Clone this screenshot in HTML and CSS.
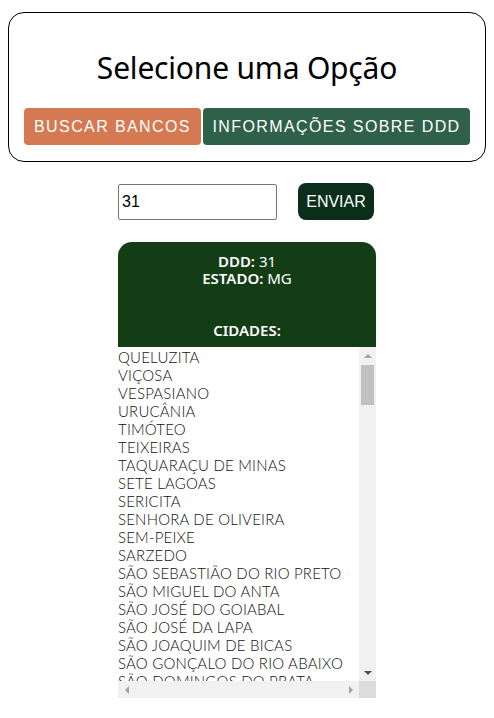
FILE: index.html
```html
<!DOCTYPE html>
<html lang="pt-BR">
<head>
<meta charset="utf-8">
<title>DDD</title>
<link rel="stylesheet" href="styles.css">
</head>
<body>
<section class="menu">
  <h1 class="title">Selecione uma Opção</h1>
  <div class="tabs">
    <button class="tab tab-banks">BUSCAR BANCOS</button>
    <button class="tab tab-ddd">INFORMAÇÕES SOBRE DDD</button>
  </div>
</section>

<form class="search">
  <input class="search-input" type="text" value="31">
  <button class="search-btn" type="button">ENVIAR</button>
</form>

<section class="result">
  <div class="result-head">
    <p class="line"><b>DDD:</b> 31</p>
    <p class="line"><b>ESTADO:</b> MG</p>
    <p class="line cities-label"><b>CIDADES:</b></p>
  </div>
  <div class="scroller">
    <ul class="cities">
      <li>QUELUZITA</li>
      <li>VIÇOSA</li>
      <li>VESPASIANO</li>
      <li>URUCÂNIA</li>
      <li>TIMÓTEO</li>
      <li>TEIXEIRAS</li>
      <li>TAQUARAÇU DE MINAS</li>
      <li>SETE LAGOAS</li>
      <li>SERICITA</li>
      <li>SENHORA DE OLIVEIRA</li>
      <li>SEM-PEIXE</li>
      <li>SARZEDO</li>
      <li>SÃO SEBASTIÃO DO RIO PRETO</li>
      <li>SÃO MIGUEL DO ANTA</li>
      <li>SÃO JOSÉ DO GOIABAL</li>
      <li>SÃO JOSÉ DA LAPA</li>
      <li>SÃO JOAQUIM DE BICAS</li>
      <li>SÃO GONÇALO DO RIO ABAIXO</li>
      <li>SÃO DOMINGOS DO PRATA</li>
      <li>SÃO BRÁS DO SUAÇUÍ</li>
      <li>SANTO HIPÓLITO</li>
      <li>SANTO ANTÔNIO DO RIO ABAIXO</li>
      <li>SANTANA DOS MONTES</li>
      <li>SANTANA DO RIACHO</li>
      <li>SANTANA DO PARAÍSO</li>
      <li>SANTA MARIA DE ITABIRA</li>
      <li>SANTA LUZIA</li>
      <li>SANTA CRUZ DO ESCALVADO</li>
      <li>SANTA BÁRBARA</li>
      <li>SABINÓPOLIS</li>
      <li>SABARÁ</li>
      <li>RIO PIRACICABA</li>
      <li>RIO MANSO</li>
      <li>RIO ESPERA</li>
      <li>RIO DOCE</li>
      <li>RIO ACIMA</li>
      <li>RIBEIRÃO DAS NEVES</li>
      <li>RESSAQUINHA</li>
      <li>RAPOSOS</li>
      <li>PRUDENTE DE MORAIS</li>
    </ul>
    <div class="vbar">
      <span class="arrow arrow-up"></span>
      <span class="vtrack"><span class="vthumb"></span></span>
      <span class="arrow arrow-down"></span>
    </div>
    <div class="hbar">
      <span class="arrow arrow-left"></span>
      <span class="htrack"></span>
      <span class="arrow arrow-right"></span>
    </div>
    <div class="corner"></div>
  </div>
</section>
</body>
</html>
```

FILE: styles.css
```css
html, body {
  margin: 0;
  padding: 0;
  background: #ffffff;
}

body {
  padding: 12px 8px 8px;
  font-family: "Noto Sans", "Open Sans", sans-serif;
  color: #000;
}

.menu {
  border: 1px solid #000;
  border-radius: 16px;
  padding: 0 16px 16px;
  display: flex;
  flex-direction: column;
  align-items: center;
}

.title {
  margin: 34px 0 19px;
  font-family: "Noto Sans", sans-serif;
  font-weight: 400;
  font-size: 30px;
  line-height: 42px;
  letter-spacing: -0.2px;
}

.tabs {
  display: flex;
  gap: 2px;
}

.tab {
  border: none;
  border-radius: 4px;
  height: 37px;
  padding: 0;
  color: #fff;
  font-family: "Liberation Sans", Arial, sans-serif;
  font-size: 16px;
  letter-spacing: 1.4px;
  white-space: nowrap;
}

.tab-banks {
  background: #d57953;
  width: 177px;
}

.tab-ddd {
  background: #2f6049;
  width: 267px;
}

.search {
  display: flex;
  justify-content: center;
  align-items: center;
  gap: 21px;
  margin: 21px 0 0;
  padding-right: 2px;
}

.search-input {
  box-sizing: border-box;
  width: 159px;
  height: 36px;
  border: 1px solid #767676;
  border-radius: 2px;
  padding: 0 3px;
  font-family: "Liberation Sans", Arial, sans-serif;
  font-size: 16px;
  color: #000;
}

.search-btn {
  width: 76px;
  height: 37px;
  border: none;
  border-radius: 8px;
  background: #0b2e1b;
  color: #fff;
  font-family: "Liberation Sans", Arial, sans-serif;
  font-size: 16px;
  padding: 0;
}

.result {
  width: 258px;
  margin: 22px auto 0;
}

.result-head {
  background: #133d15;
  color: #fff;
  border-radius: 14px 14px 0 0;
  padding: 11px 0 8px;
  text-align: center;
  font-family: "Noto Sans", sans-serif;
  font-size: 15px;
}

.line {
  margin: 0;
  line-height: 17px;
}

.line b {
  font-weight: 600;
}

.cities-label {
  margin-top: 35px;
}

.scroller {
  display: grid;
  grid-template-columns: 241px 17px;
  grid-template-rows: 334px 17px;
}

.cities {
  list-style: none;
  margin: 0;
  padding: 1px 0 0;
  overflow: hidden;
  font-family: "Lato", sans-serif;
  font-weight: 300;
  font-size: 15px;
  line-height: 18px;
  letter-spacing: 0.2px;
  color: #111;
  white-space: nowrap;
}

.vbar {
  background: #f1f1f1;
  display: flex;
  flex-direction: column;
}

.hbar {
  background: #f1f1f1;
  display: flex;
}

.corner {
  background: #dcdcdc;
}

.arrow {
  flex: 0 0 17px;
  width: 17px;
  height: 17px;
  display: flex;
  align-items: center;
  justify-content: center;
}

.arrow::before {
  content: "";
  width: 0;
  height: 0;
  border: 4px solid transparent;
}

.arrow-up::before {
  border-top: 0;
  border-bottom: 4px solid #a3a3a3;
}

.arrow-down::before {
  border-bottom: 0;
  border-top: 4px solid #505050;
}

.arrow-left::before {
  border-left: 0;
  border-right: 4px solid #a3a3a3;
}

.arrow-right::before {
  border-right: 0;
  border-left: 4px solid #a3a3a3;
}

.vtrack {
  flex: 1;
  padding: 1px 2px 0;
}

.vthumb {
  display: block;
  height: 40px;
  background: #c1c1c1;
}

.htrack {
  flex: 1;
}
```
